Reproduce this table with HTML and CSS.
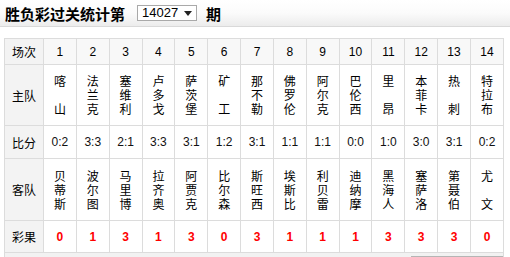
FILE: index.html
```html
<!DOCTYPE html>
<html lang="zh">
<head>
<meta charset="utf-8">
<link rel="stylesheet" href="styles.css">
</head>
<body>
<div class="topbar">
  <span class="title">胜负彩过关统计第</span>
  <div class="issue-select"><span>14027</span><svg class="caret" width="8" height="5" viewBox="0 0 8 5"><path d="M0 0H8L4 5Z" fill="#222"/></svg></div>
  <span class="title">期</span>
</div>
<div class="wrap">
<table class="stats">
  <colgroup><col class="c-label"><col span="14"></colgroup>
  <tr class="r-head">
    <th class="label">场次</th>
    <th>1</th><th>2</th><th>3</th><th>4</th><th>5</th><th>6</th><th>7</th><th>8</th><th>9</th><th>10</th><th>11</th><th>12</th><th>13</th><th>14</th>
  </tr>
  <tr class="r-team r-home">
    <th class="label">主队</th>
    <td>喀<br>&nbsp;<br>山</td>
    <td>法<br>兰<br>克</td>
    <td>塞<br>维<br>利</td>
    <td>卢<br>多<br>戈</td>
    <td>萨<br>茨<br>堡</td>
    <td>矿<br>&nbsp;<br>工</td>
    <td>那<br>不<br>勒</td>
    <td>佛<br>罗<br>伦</td>
    <td>阿<br>尔<br>克</td>
    <td>巴<br>伦<br>西</td>
    <td>里<br>&nbsp;<br>昂</td>
    <td>本<br>菲<br>卡</td>
    <td>热<br>&nbsp;<br>刺</td>
    <td>特<br>拉<br>布</td>
  </tr>
  <tr class="r-score">
    <th class="label">比分</th>
    <td>0:2</td><td>3:3</td><td>2:1</td><td>3:3</td><td>3:1</td><td>1:2</td><td>3:1</td><td>1:1</td><td>1:1</td><td>0:0</td><td>1:0</td><td>3:0</td><td>3:1</td><td>0:2</td>
  </tr>
  <tr class="r-team r-away">
    <th class="label">客队</th>
    <td>贝<br>蒂<br>斯</td>
    <td>波<br>尔<br>图</td>
    <td>马<br>里<br>博</td>
    <td>拉<br>齐<br>奥</td>
    <td>阿<br>贾<br>克</td>
    <td>比<br>尔<br>森</td>
    <td>斯<br>旺<br>西</td>
    <td>埃<br>斯<br>比</td>
    <td>利<br>贝<br>雷</td>
    <td>迪<br>纳<br>摩</td>
    <td>黑<br>海<br>人</td>
    <td>塞<br>萨<br>洛</td>
    <td>第<br>聂<br>伯</td>
    <td>尤<br>&nbsp;<br>文</td>
  </tr>
  <tr class="r-result">
    <th class="label">彩果</th>
    <td>0</td><td>1</td><td>3</td><td>1</td><td>3</td><td>0</td><td>3</td><td>1</td><td>1</td><td>1</td><td>3</td><td>3</td><td>3</td><td>0</td>
  </tr>
</table>
<div class="footer-bar"><div class="footer-thumb"></div></div>
</div>
</body>
</html>
```
FILE: styles.css
```css
html, body {
  margin: 0;
  padding: 0;
  background: #fff;
  overflow: hidden;
}
body {
  font-family: "Noto Sans CJK SC", "Liberation Sans", sans-serif;
  color: #000;
}
.topbar {
  height: 26px;
  border-bottom: 1px solid #d9d9d9;
  background: linear-gradient(#ffffff 0%, #fbfbfb 50%, #ececec 100%);
  display: flex;
  align-items: center;
  padding-left: 5px;
  box-sizing: content-box;
}
.title {
  font-size: 15px;
  font-weight: bold;
  line-height: 15px;
  color: #000;
}
.issue-select {
  margin-left: 12px;
  margin-right: 9px;
  width: 54px;
  height: 14px;
  border: 1px solid #a9a9a9;
  background: #fff;
  display: flex;
  align-items: center;
  padding-left: 4px;
  box-sizing: content-box;
  font-family: "Liberation Sans", Arial, sans-serif;
  font-size: 13px;
  line-height: 14px;
  color: #000;
}
.issue-select span {
  flex: 1;
}
.caret {
  margin-right: 4px;
  margin-top: 1px;
}
.wrap {
  padding: 11px 0 0 4px;
}
.stats {
  border-collapse: collapse;
  table-layout: fixed;
  width: 500px;
}
.c-label {
  width: 39px;
}
.stats th, .stats td {
  border: 1px solid #dcdcdc;
  padding: 0;
  text-align: center;
  vertical-align: middle;
  font-weight: normal;
  font-size: 12px;
}
.stats th.label {
  background: #f3f3f3;
  font-family: "Noto Sans CJK SC", sans-serif;
  font-size: 12px;
}
.r-head th {
  background: #f8f8f8;
  height: 25px;
  font-family: "Liberation Sans", Arial, sans-serif;
}
.r-team td {
  font-family: "Noto Sans CJK SC", sans-serif;
  font-size: 12px;
  line-height: 14px;
}
.r-home td, .r-home th {
  height: 60px;
}
.r-away td, .r-away th {
  height: 61px;
}
.r-score td, .r-score th {
  height: 32px;
}
.r-score td {
  font-family: "Liberation Sans", Arial, sans-serif;
  color: #111;
}
.r-result td, .r-result th {
  height: 31px;
}
.r-result td {
  font-family: "Liberation Sans", Arial, sans-serif;
  font-weight: bold;
  color: #ff0000;
}
.footer-bar {
  width: 498px;
  height: 10px;
  background: #f2f2f2;
  border-left: 1px solid #dcdcdc;
  border-right: 1px solid #dcdcdc;
  display: flex;
  justify-content: flex-end;
  padding-top: 3px;
}
.footer-thumb {
  width: 92px;
  height: 8px;
  background: #b5b5b5;
}
```
